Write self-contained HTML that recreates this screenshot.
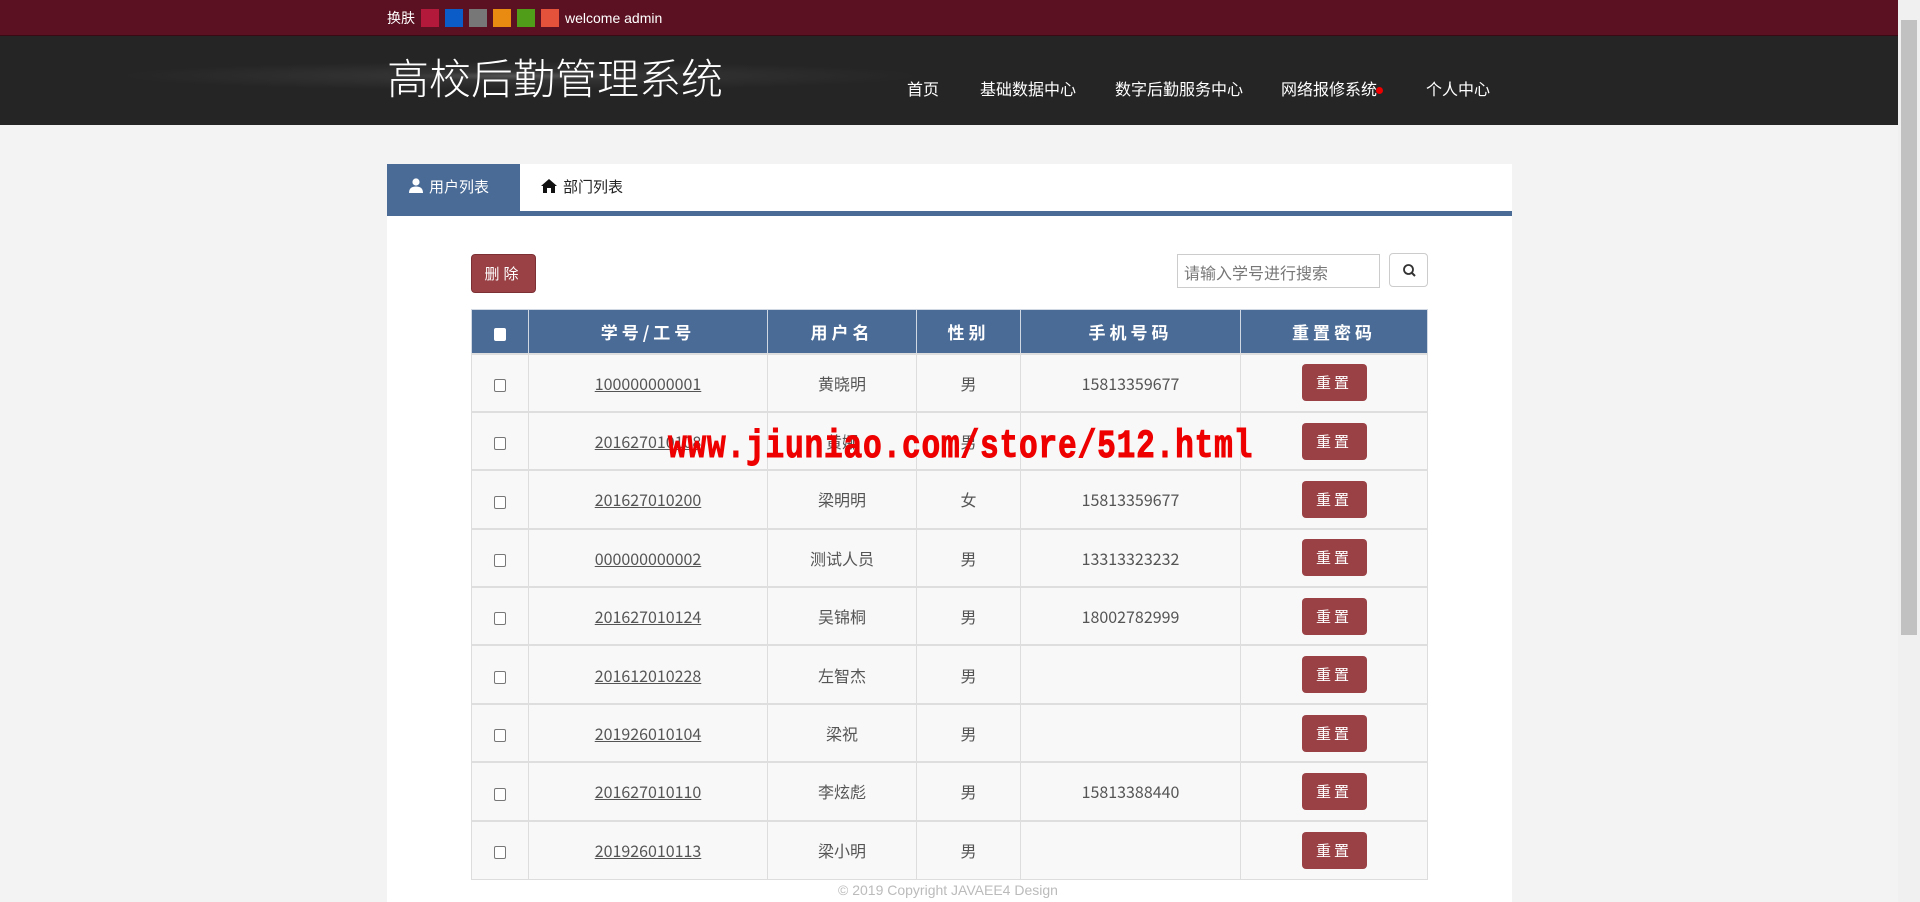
<!DOCTYPE html>
<html><head><meta charset="utf-8"><style>
*{margin:0;padding:0;box-sizing:border-box}
body{width:1920px;height:902px;overflow:hidden;background:#f3f3f3;font-family:"Liberation Sans","Noto Sans CJK SC",sans-serif;position:relative}
.top{position:absolute;left:0;top:0;width:1898px;height:36px;background:#5b1121;border-bottom:1px solid #3a0a14}
.top .in{position:absolute;left:387px;top:8px;font-size:14px;color:#fff;display:flex;align-items:center}
.sw{display:inline-block;width:18px;height:18px;margin-left:6px}
.hdr{position:absolute;left:0;top:36px;width:1898px;height:89px;background:radial-gradient(ellipse at 520px 40px,#555 0,#333 120px,#252525 400px);}
.title{position:absolute;left:387px;top:10px;font-size:42px;color:#fff;font-weight:300}
.nav{position:absolute;top:40px;font-size:16px;color:#fff}
.dot{position:absolute;left:1376px;top:87px;width:7px;height:7px;border-radius:50%;background:#e00}
.panel{position:absolute;left:387px;top:164px;width:1125px;height:738px;background:#fff}
.tabbar{position:absolute;left:0;top:47px;width:1125px;height:5px;background:#4a6b96}
.tab1{position:absolute;left:0;top:0;width:133px;height:52px;background:#4a6b96;color:#fff;font-size:15px;line-height:48px;padding-left:22px}
.tab2{position:absolute;left:154px;top:0;font-size:15px;line-height:48px;color:#222}
.del{position:absolute;left:84px;top:90px;width:65px;height:39px;background:#9a4145;border-radius:4px;color:#fff;font-size:15px;text-align:center;line-height:39px;letter-spacing:4px;border:1px solid #7d3034}
.srch{position:absolute;left:790px;top:90px;width:203px;height:34px;border:1px solid #ccc;font-size:16px;color:#777;padding:5px 6px}
.sbtn{position:absolute;left:1002px;top:89px;width:39px;height:34px;border:1px solid #ccc;border-radius:4px;background:#fff}
table{position:absolute;left:84px;top:145px;border-collapse:collapse;width:957px;font-size:16px;color:#555;font-family:"Noto Sans CJK SC",sans-serif}
th{background:#4a6b96;color:#fff;height:44px;font-weight:bold;letter-spacing:4px;border:1px solid #d0d8e4;font-size:17px}
td{height:58.4px;text-align:center;background:#f8f8f8;border-left:1px solid #ddd;border-right:1px solid #ddd;border-top:2px solid #dedede;vertical-align:middle;line-height:20px}
td u{color:#555}
.cb{display:inline-block;width:12px;height:13px;border:1px solid #777;border-radius:2px;background:#fff;vertical-align:middle}
.rb{display:inline-block;width:65px;height:37px;background:#9a4145;border-radius:4px;color:#fff;line-height:37px;font-size:15px;letter-spacing:3px}
.foot{position:absolute;left:838px;top:882px;font-size:14px;color:#bbb}
.wm{position:absolute;left:668px;top:425px;font-size:40px;font-weight:bold;color:#e00;font-family:"Liberation Mono",monospace;letter-spacing:1px;-webkit-text-stroke:1px #e00;transform:scaleX(0.78);transform-origin:left}
.sb{position:absolute;left:1898px;top:0;width:22px;height:902px;background:#f0f0f0}
.sb div{position:absolute;left:3px;top:20px;width:16px;height:615px;background:#c1c1c1}
</style></head><body>
<div class="top"><div class="in">换肤<span class="sw" style="background:#b3193b"></span><span class="sw" style="background:#0b5bc9"></span><span class="sw" style="background:#777"></span><span class="sw" style="background:#e88b10"></span><span class="sw" style="background:#4f9d19"></span><span class="sw" style="background:#e4523c"></span><span style="margin-left:6px">welcome admin</span></div></div>
<div class="hdr"><div class="title">高校后勤管理系统</div>
<span class="nav" style="left:907px">首页</span><span class="nav" style="left:980px">基础数据中心</span><span class="nav" style="left:1115px">数字后勤服务中心</span><span class="nav" style="left:1281px">网络报修系统</span><span class="nav" style="left:1426px">个人中心</span></div>
<div class="dot"></div>
<div class="panel">
<div class="tabbar"></div>
<div class="tab1"><svg width="14" height="15" viewBox="0 0 14 15" style="vertical-align:-1px;margin-right:6px"><circle cx="7" cy="4" r="3.6" fill="#fff"/><path d="M0 15c0-5 3-6.5 7-6.5s7 1.5 7 6.5z" fill="#fff"/></svg>用户列表</div>
<div class="tab2"><svg width="16" height="14" viewBox="0 0 16 14" style="vertical-align:-1px;margin-right:6px"><path d="M8 0L0 7h2v7h4V9h4v5h4V7h2z" fill="#111"/></svg>部门列表</div>
<div class="del">删除</div>
<div class="srch">请输入学号进行搜索</div>
<div class="sbtn"><svg width="39" height="34" viewBox="0 0 39 34"><circle cx="18.5" cy="15.5" r="4.5" fill="none" stroke="#333" stroke-width="1.8"/><path d="M21.5 18.5l3.5 3.5" stroke="#333" stroke-width="2"/></svg></div>
<table>
<tr><th style="width:57px"><span class="cb" style="border-color:#fff"></span></th><th style="width:239px">学号/工号</th><th style="width:149px">用户名</th><th style="width:104px">性别</th><th style="width:220px">手机号码</th><th>重置密码</th></tr>
<tr><td><span class="cb"></span></td><td><u>100000000001</u></td><td>黄晓明</td><td>男</td><td>15813359677</td><td><span class="rb">重置</span></td></tr>
<tr><td><span class="cb"></span></td><td><u>201627010108</u></td><td>黄娜</td><td>男</td><td></td><td><span class="rb">重置</span></td></tr>
<tr><td><span class="cb"></span></td><td><u>201627010200</u></td><td>梁明明</td><td>女</td><td>15813359677</td><td><span class="rb">重置</span></td></tr>
<tr><td><span class="cb"></span></td><td><u>000000000002</u></td><td>测试人员</td><td>男</td><td>13313323232</td><td><span class="rb">重置</span></td></tr>
<tr><td><span class="cb"></span></td><td><u>201627010124</u></td><td>吴锦桐</td><td>男</td><td>18002782999</td><td><span class="rb">重置</span></td></tr>
<tr><td><span class="cb"></span></td><td><u>201612010228</u></td><td>左智杰</td><td>男</td><td></td><td><span class="rb">重置</span></td></tr>
<tr><td><span class="cb"></span></td><td><u>201926010104</u></td><td>梁祝</td><td>男</td><td></td><td><span class="rb">重置</span></td></tr>
<tr><td><span class="cb"></span></td><td><u>201627010110</u></td><td>李炫彪</td><td>男</td><td>15813388440</td><td><span class="rb">重置</span></td></tr>
<tr><td style="border-bottom:1px solid #ddd"><span class="cb"></span></td><td style="border-bottom:1px solid #ddd"><u>201926010113</u></td><td style="border-bottom:1px solid #ddd">梁小明</td><td style="border-bottom:1px solid #ddd">男</td><td style="border-bottom:1px solid #ddd"></td><td style="border-bottom:1px solid #ddd"><span class="rb">重置</span></td></tr>
</table>
</div>
<div class="wm">www.jiuniao.com/store/512.html</div>
<div class="foot">© 2019 Copyright JAVAEE4 Design</div>
<div class="sb"><div></div></div>
</body></html>
